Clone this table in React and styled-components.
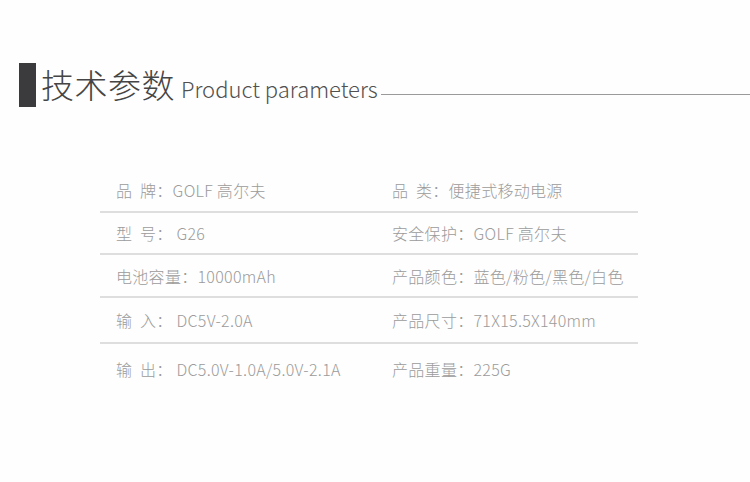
import styled, { createGlobalStyle } from "styled-components";

const Global = createGlobalStyle`
  html, body {
    margin: 0;
    padding: 0;
    background: #fff;
  }
  body {
    font-family: "Noto Sans CJK SC", "Noto Sans", sans-serif;
  }
`;

const Page = styled.div`
  width: 750px;
  height: 482px;
  background: #fefefe;
  overflow: hidden;
  padding-top: 63px;
  box-sizing: border-box;
`;

const Header = styled.div`
  display: flex;
  align-items: flex-start;
  padding-left: 19px;
`;

const Bar = styled.div`
  width: 17px;
  height: 44px;
  background: #3b3b3d;
  flex: none;
`;

const TitleLine = styled.div`
  flex: 1;
  display: flex;
  align-items: baseline;
  height: 44px;
  margin-left: 5px;
`;

const TitleCn = styled.span`
  font-size: 33px;
  font-weight: 300;
  line-height: 42px;
  color: #454545;
  letter-spacing: 0.5px;
`;

const TitleEn = styled.span`
  font-size: 22px;
  font-weight: 300;
  color: #505050;
  margin-left: 6px;
`;

const Rule = styled.span`
  flex: 1;
  align-self: flex-end;
  height: 0;
  border-bottom: 1px solid #9a9a9a;
  margin: 0 0 12px 3px;
`;

const Table = styled.div`
  margin: 61px 0 0 100px;
  width: 538px;
`;

const Row = styled.div`
  display: grid;
  grid-template-columns: 276px 1fr;
  align-items: center;
  height: ${(p) => p.$h}px;
  box-sizing: border-box;
  border-bottom: ${(p) => (p.$last ? "none" : "2px solid #dedede")};
`;

const Cell = styled.div`
  padding-left: 16px;
  font-size: 16px;
  font-weight: 300;
  color: #9b9b9b;
  white-space: pre;
  letter-spacing: 0.3px;
`;

const rows = [
  { h: 45, l: "品  牌：GOLF 高尔夫", r: "品  类：便捷式移动电源" },
  { h: 42, l: "型  号： G26", r: "安全保护：GOLF 高尔夫" },
  { h: 43, l: "电池容量：10000mAh", r: "产品颜色：蓝色/粉色/黑色/白色" },
  { h: 46, l: "输  入： DC5V-2.0A", r: "产品尺寸：71X15.5X140mm" },
  { h: 50, l: "输  出： DC5.0V-1.0A/5.0V-2.1A", r: "产品重量：225G", last: true },
];

export default function App() {
  return (
    <Page>
      <Global />
      <Header>
        <Bar />
        <TitleLine>
          <TitleCn>技术参数</TitleCn>
          <TitleEn>Product parameters</TitleEn>
          <Rule />
        </TitleLine>
      </Header>
      <Table>
        {rows.map((row) => (
          <Row key={row.l} $h={row.h} $last={row.last}>
            <Cell>{row.l}</Cell>
            <Cell>{row.r}</Cell>
          </Row>
        ))}
      </Table>
    </Page>
  );
}
